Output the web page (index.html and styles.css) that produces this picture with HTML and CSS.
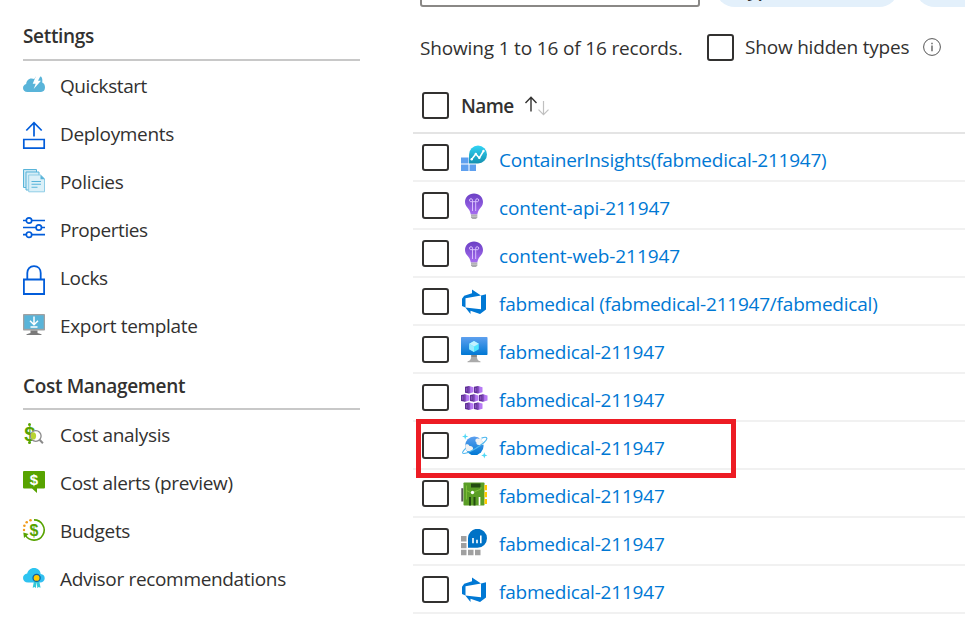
FILE: index.html
```html
<!DOCTYPE html>
<html lang="en">
<head>
<meta charset="utf-8">
<title>Resource group</title>
<link rel="stylesheet" href="styles.css">
</head>
<body>
<svg class="defs" width="0" height="0" aria-hidden="true">
  <defs>
    <linearGradient id="bulb" x1="0" y1="0" x2="0" y2="1"><stop offset="0" stop-color="#6b40c4"/><stop offset="1" stop-color="#a66df0"/></linearGradient>
    <linearGradient id="screen" x1="0" y1="0" x2="0" y2="1"><stop offset="0" stop-color="#5ea0ef"/><stop offset="1" stop-color="#0078d4"/></linearGradient>
    <linearGradient id="insight" x1="0" y1="0" x2="0" y2="1"><stop offset="0" stop-color="#32d4f5"/><stop offset="1" stop-color="#1490b0"/></linearGradient>
    <linearGradient id="cloud" x1="0" y1="0" x2="1" y2="1"><stop offset="0" stop-color="#2bc8f0"/><stop offset="1" stop-color="#32bdf0"/></linearGradient>
    <symbol id="devops" viewBox="0 0 27 27"><path fill="#0078d4" d="M25 5.200V20.500L19 25L9.500 21.700V25L4.300 18.500L20 20.300V6.500ZM20 6.500L11 .5V4.200L3.200 6.700L1 9.800V17L4.500 18.500V9.300Z"/></symbol>
    <symbol id="light" viewBox="0 0 27 27"><path fill="url(#bulb)" d="M13 .5C7.700.5 4 4.500 4 9c0 3.300 2 5.200 3.500 7 1.300 1.600 2 3.800 2.300 5.500h6.500c.3-1.700 1-3.900 2.300-5.500C20.200 14.200 22 12.300 22 9 22 4.500 18.400.5 13 .5Z"/><path d="M11.500 18V8.700m3.200 9.300V8.700M9.500 8.700h7.200M9.700 8.700a1.500 1.500 0 1 1 1.800-1.500v1.500M16.500 8.700a1.500 1.500 0 1 0-1.800-1.500v1.500" fill="none" stroke="#e0caff" stroke-width=".9"/><path fill="#a9a9ad" d="M10 21.500h6.300v3L15 26h-3.600L10 24.500Z"/><path stroke="#ddd" stroke-width=".6" d="M10 23.200h6.300"/></symbol>
    <g id="pod"><path fill="#5f3195" d="M0 .8 4 0V7.500L0 6.700Z"/><path fill="#b77af4" d="M4 0 8.500 1.200V6.300L4 7.500Z"/><path fill="#8650c0" d="M3.400.3h1.800v6.900H3.400Z"/><path stroke="#a66bdc" stroke-width=".8" d="M1.800 2v3.600"/></g>
  </defs>
</svg>

<div class="page">
  <nav class="sidebar">
    <h2 class="group">Settings</h2>
    <ul class="menu">
      <li><svg viewBox="0 0 22 32"><path fill="#59b4d9" d="M4.500 22C1.500 22 0 20.200 0 18c0-2 1.400-3.500 3.200-4 0-3 2.300-5.500 5.300-5.500 1 0 2 .2 2.700.6L13 6.500h5c1.500 1.500 1.500 3.500 1.200 6 1.800.8 2.800 2.500 2.800 4.800 0 2.800-1.500 4.700-4 4.700Z"/><path fill="#fff" d="M13 6h4.500L15 10.700h3L10.700 19l2-5.300h-3Z"/></svg><span class="tight-text">Quickstart</span></li>
      <li><svg viewBox="0 0 22 32" fill="none" stroke="#015cda" stroke-width="1.700"><path d="M.8 21.500h20.400v8.700H.8ZM11 18.500V5M3.300 12.500 11 4.700l7.700 7.800"/></svg><span>Deployments</span></li>
      <li><svg viewBox="0 0 22 32" stroke="#59b4d9"><path fill="#c9e7f3" stroke-width="1" d="M.5 3.500h13v18H.5Z"/><path fill="#d5edf6" stroke-width="1" d="M3 6h13v18H3Z"/><path fill="#dbf0f8" stroke="#8fcde6" stroke-width="1" d="M5.700 9h12l3.800 3.800v13H5.700Z"/><path fill="#59b4d9" stroke="none" d="M17.500 9 22 13.300h-4.500Z"/><path stroke-width="1.100" d="M8.500 15.500h9.500M8.500 18.300h9.500M8.500 21.300h6"/></svg><span>Policies</span></li>
      <li><svg viewBox="0 0 22 32" fill="none" stroke="#015cda" stroke-width="1.700"><path d="M0 6.500h3.200m5.600 0H22M0 13.500h13m5.500 0H22M0 20.700h3.200m5.600 0H22"/><circle cx="6" cy="6.500" r="2.700"/><circle cx="15.800" cy="13.500" r="2.700"/><circle cx="6" cy="20.700" r="2.700"/></svg><span class="tight-text">Properties</span></li>
      <li><svg viewBox="0 0 22 32" fill="none" stroke="#015cda" stroke-width="1.800"><path d="M.9 17.500h20.200v14.500H.9ZM4.300 17.500V11c0-4 2.500-6.900 6.700-6.900s6.700 2.900 6.700 6.900v6.500"/></svg><span>Locks</span></li>
      <li><svg viewBox="0 0 22 32"><rect y="4" width="22" height="16.500" rx=".8" fill="#a0a1a2"/><path fill="#59b4d9" d="M1.300 5.300h19.400v13.500H1.300Z"/><path fill="#7a7a7a" d="M7.500 20.500h7v2.500l4 1.200v.8h-15v-.8l4-1.200Z"/><path fill="none" stroke="#fff" stroke-width="1.500" d="M11 6.500v7.800M7 10.800l4 4 4-4M7.500 17h7"/></svg><span>Export template</span></li>
    </ul>
    <h2 class="group second">Cost Management</h2>
    <ul class="menu">
      <li><svg viewBox="0 0 22 32"><text x="1.200" y="21.500" class="dollar" font-size="20" fill="#57a300">$</text><circle cx="6.500" cy="5.400" r="1.500" fill="#57a300"/><circle cx="6.500" cy="23.500" r="1.500" fill="#57a300"/><circle cx="12.800" cy="17" r="5.300" fill="#fff" stroke="#8a8a8a" stroke-width="1.300"/><path fill="#b8d432" d="M8.800 13.400c3-.8 4.300 1 4.300 3.500S11.500 21.200 9 20.400c-1.500-2-1.500-5-.2-7Z"/><path stroke="#8a8a8a" stroke-width="2" d="m16.600 20.700 3.300 3.500"/></svg><span>Cost analysis</span></li>
      <li><svg viewBox="0 0 22 32"><path fill="#57a300" d="M1 4h20a1 1 0 0 1 1 1v15.500a1 1 0 0 1-1 1h-7V26l-5-4.500H1a1 1 0 0 1-1-1V5a1 1 0 0 1 1-1Z"/><text x="6.700" y="17.800" class="dollar" font-size="15" fill="#fff">$</text></svg><span>Cost alerts (preview)</span></li>
      <li><svg viewBox="0 0 22 32"><path fill="none" stroke="#57a300" stroke-width="1.600" d="M11 4.900a10.100 10.100 0 1 1-8.500 15.500"/><path fill="#57a300" d="M.3 17.500 5.600 19 1 23Z"/><g fill="#f09b1c"><circle cx="7.500" cy="5.300" r="1.300"/><circle cx="3.700" cy="7.300" r="1.300"/><circle cx="1.400" cy="10.800" r="1.300"/><circle cx="1" cy="15" r="1.200"/></g><text x="6.600" y="20.500" class="dollar" font-size="16" fill="#57a300">$</text></svg><span>Budgets</span></li>
      <li><svg viewBox="0 0 22 32"><path fill="url(#cloud)" d="M5 19.500c-3 0-5-1.800-5-4.500 0-2.500 1.800-4.200 4.200-4.500C4.700 7.500 7.500 5 11 5c3.800 0 6.300 2.500 6.700 6 2.500.2 4 1.900 4 4.200 0 2.500-1.900 4.300-4.500 4.300Z"/><path fill="#32c8d8" d="m11 18-1.300 6.800 2-.8 1.100 1.200L13.600 19l.8 6.200 1.200-1.200 2 .8L16.200 18Z"/><circle cx="13.600" cy="14.900" r="4.200" fill="#0f5f9e"/><circle cx="13.600" cy="14.900" r="2.900" fill="#ffca00"/></svg><span>Advisor recommendations</span></li>
    </ul>
  </nav>

  <main class="content">
    <div class="filters">
      <div class="search"></div>
      <div class="pill"><span>Type</span></div>
      <div class="pill wide"></div>
    </div>
    <div class="summary">
      <span class="count">Showing 1 to 16 of 16 records.</span>
      <span class="box"></span>
      <span class="hidden-types">Show hidden types</span>
      <svg class="info" viewBox="0 0 18 18" fill="none" stroke="#555"><circle cx="9" cy="9" r="8.400" stroke-width="1"/><path stroke-width="1.300" d="M9 7.500v5.700M9 4.700v1.500"/></svg>
    </div>
    <div class="head">
      <span class="box"></span>
      <span class="name">Name</span>
      <svg class="sort" viewBox="0 0 26 22" fill="none"><path stroke="#323130" stroke-width="1.400" d="M7 16.500V2.500M1.500 8 7 2.300 12.500 8"/><path stroke="#c0c0c0" stroke-width="1.200" d="M19.500 6v13.500M14.500 14.700l5 5 5-5"/></svg>
    </div>
    <div class="rows">
      <div class="row"><span class="box"></span><svg viewBox="0 0 27 27"><path fill="#5ea0ef" d="M0 12.500h7.500v6H0ZM0 19.500h7.500V26H0ZM8.500 19.500h6.500V26H8.500Z"/><path fill="url(#insight)" d="M8 18.500V9.500A9 9 0 1 1 17 18.500Z"/><path fill="none" stroke="#fff" stroke-width="1.500" d="m10.500 14.500 4.300-5.500 3.500 4L22.500 6"/><g fill="#fff"><circle cx="10.700" cy="14.200" r="1.200"/><circle cx="14.800" cy="9" r="1.200"/><circle cx="18.300" cy="12.800" r="1.200"/><circle cx="22.500" cy="6" r="1.200"/></g></svg><a class="insights">ContainerInsights(fabmedical-211947)</a></div>
      <div class="row"><span class="box"></span><svg><use href="#light"/></svg><a class="app">content-api-211947</a></div>
      <div class="row"><span class="box"></span><svg><use href="#light"/></svg><a class="app">content-web-211947</a></div>
      <div class="row"><span class="box"></span><svg><use href="#devops"/></svg><a class="project">fabmedical (fabmedical-211947/fabmedical)</a></div>
      <div class="row"><span class="box"></span><svg viewBox="0 0 27 27"><rect width="26.500" height="18" rx=".7" fill="url(#screen)"/><path fill="#50e6ff" d="m13 4 4.800 2.700v5.600L13 15l-4.800-2.700V6.700Z"/><path fill="#c3f1ff" d="m13 4 4.800 2.700L13 9.500 8.200 6.700Z"/><path fill="#9cebff" d="m8.200 6.700 4.800 2.800V15l-4.800-2.700Z"/><path fill="#aaa" d="M10.300 18h5.500c0 4 .8 5.500 3.700 6.500v.7h-13v-.7c3-1 3.800-2.500 3.800-6.500Z"/><path fill="#888" d="M10.300 18h5.500v2h-5.500Z"/></svg><a>fabmedical-211947</a></div>
      <div class="row"><span class="box"></span><svg viewBox="0 0 27 27"><use href="#pod" x="4" y="1"/><use href="#pod" x="13" y="1"/><use href="#pod" x="0" y="9.200"/><use href="#pod" x="9" y="9.200"/><use href="#pod" x="18" y="9.200"/><use href="#pod" x="4" y="17.400"/><use href="#pod" x="13" y="17.400"/></svg><a>fabmedical-211947</a></div>
      <div class="row"><span class="box"></span><svg viewBox="0 0 27 27"><circle cx="13.300" cy="12.800" r="9.300" fill="url(#screen)"/><path fill="#f2f2f2" d="M4.300 11.800c2-1 3.800-.3 4.100 1.200 2-.3 3.900.8 3.700 2.800-.2 1.700-1.500 2.400-3 2.400H6C4.600 16.500 4 14.100 4.300 11.800ZM14.500 8c-.7-2 1.500-3 2.800-2.200.7-.7 1.700-.8 2.400 0 1.600 1.500 2.800 3.700 2.900 6.200h-4.800c-1.800 0-2.700-1.200-2.300-2.500-.6-.3-.9-.7-1-1.500Z"/><path fill="none" stroke="#50b8ef" stroke-width="1.200" d="M20.500 5.100c3-1 5-.9 5.300 0 .6 1.700-4.300 6-10.700 10.200C8.600 19.300 2.600 21.500 1.700 20c-.5-.9.900-2.600 3-4.700"/><path fill="#50d8f5" d="m4.200.3.8 2.400 2.400.8-2.400.8-.8 2.400-.8-2.400L1 3.500l2.400-.8ZM23.300 19.300l.8 2.300 2.300.8-2.300.8-.8 2.300-.8-2.300-2.300-.8 2.300-.8Z"/></svg><a>fabmedical-211947</a></div>
      <div class="row"><span class="box"></span><svg viewBox="0 0 27 27"><path fill="#555" d="M.3 7.200h2V20.500h-2Z"/><rect x="2.500" y="1.500" width="21" height="23" rx=".8" fill="#5a9e26"/><path fill="#ffca00" d="M23.500 4H26v5.300h-2.500ZM23.500 11H26v5.300h-2.500ZM23.500 18H26v5h-2.500Z"/><path fill="#244b12" d="M10 2.500h9.500v4H10Z"/><path stroke="#244b12" stroke-width="2" d="M9 16v8.500M13.500 16v8.500"/><path stroke="#fff" stroke-width="1.700" d="M18.500 16v8.500"/><path fill="none" stroke="#86c440" stroke-width=".8" d="M5.500 4.500v14m0-9 4 2M13 11l7-3v-2"/><circle cx="11.500" cy="11.500" r="1.700" fill="#fff"/></svg><a>fabmedical-211947</a></div>
      <div class="row"><span class="box"></span><svg viewBox="0 0 27 27"><path fill="#a0a0a0" d="M0 7h5.500v5.500H0ZM0 14h5.500v5.200H0ZM0 20.700h5.500v5.500H0ZM7 20.700h5.500v5.500H7ZM14 20.700h5.500v5.500H14Z"/><path fill="#0072c6" d="M7 18.800V9.600A9.500 9.500 0 1 1 16.500 18.800Z"/><path stroke="#fff" stroke-width="1.600" d="M12 14.300V9M16 14.300v-3.500M19.800 14.300V6.500"/></svg><a>fabmedical-211947</a></div>
      <div class="row"><span class="box"></span><svg><use href="#devops"/></svg><a>fabmedical-211947</a></div>
      <div class="highlight"></div>
    </div>
  </main>
</div>
</body>
</html>
```
FILE: styles.css
```css
* { box-sizing: border-box; }
body {
  margin: 0;
  background: #fff;
  color: #323130;
  font: 19px/26px "Open Sans", "Noto Sans", sans-serif;
  letter-spacing: -0.2px;
}
.defs { position: absolute; }
.page { display: flex; height: 620px; overflow: hidden; }
.sidebar { width: 413px; flex: none; padding: 23px 53px 0 23px; letter-spacing: -0.33px; }
.group {
  margin: 0;
  height: 38px;
  border-bottom: 2px solid #c8c8c8;
  font-size: 19px;
  line-height: 26px;
  font-weight: 600;
  white-space: nowrap;
}
.group.second { margin-top: 23px; height: 37px; }
.menu { list-style: none; margin: 0; padding: 1px 0 0; }
.menu li { height: 48px; display: flex; align-items: center; gap: 15px; white-space: nowrap; }
.menu svg { width: 22px; height: 32px; flex: none; overflow: visible; }
.tight-text { letter-spacing: -0.43px; }
.dollar { font-family: "Liberation Sans", sans-serif; font-weight: 700; letter-spacing: 0; }

.content { flex: 1; min-width: 0; white-space: nowrap; }
.filters { display: flex; height: 7px; padding-left: 7px; align-items: flex-end; }
.search { width: 280px; height: 36px; border: 2px solid #8a8886; border-radius: 3px; flex: none; }
.pill { width: 184px; height: 40px; margin-left: 15px; border-radius: 20px; background: #e3f0fb; flex: none; padding: 11px 0 0 22px; line-height: 22px; font-weight: 600; }
.pill.wide { margin-left: 16px; }
.box { width: 27px; height: 27px; border: 2px solid #323130; border-radius: 3px; flex: none; }
.summary { display: flex; height: 80px; padding: 0 0 0 7px; align-items: center; }
.count { width: 287px; letter-spacing: -0.16px; padding-top: 1px; }
.summary .box { margin-right: 11px; }
.hidden-types { width: 178px; }
.info { width: 18px; height: 18px; flex: none; }
.head { display: flex; height: 47px; padding: 5px 0 0 9px; align-items: flex-start; border-bottom: 2px solid #e4e4e4; }
.name { margin-left: 12px; width: 63px; font-weight: 600; letter-spacing: -0.6px; padding-top: 1px; }
.sort { width: 26px; height: 22px; margin-top: 3px; }
.rows { position: relative; }
.row { display: flex; height: 48px; padding-left: 9px; align-items: center; border-bottom: 2px solid #f1f1f1; }
.row svg { width: 27px; height: 27px; margin: 2px 11px 0 12px; flex: none; }
.row a { color: #0078d4; padding-top: 6px; }
.row .insights { letter-spacing: -0.24px; }
.row .app { letter-spacing: -0.08px; }
.row .project { letter-spacing: -0.22px; }
.highlight { position: absolute; left: 3px; top: 285px; width: 320px; height: 59px; border: 5px solid #ed1c24; }
```
